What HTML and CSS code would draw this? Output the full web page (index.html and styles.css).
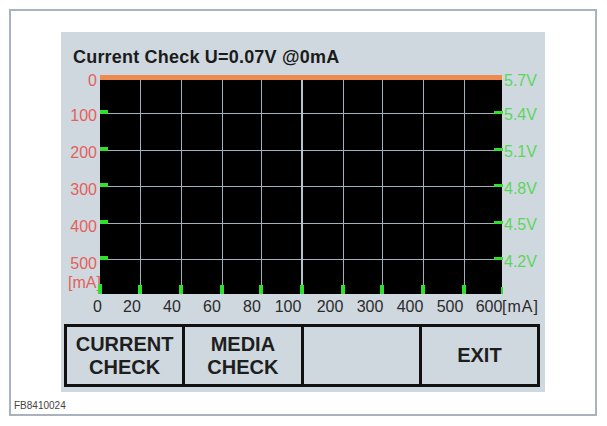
FILE: index.html
```html
<!DOCTYPE html>
<html lang="en">
<head>
    <meta charset="UTF-8">
    <title>Current Check</title>
    <link rel="stylesheet" href="styles.css">
</head>
<body>
    <div class="frame">
        <div class="screen">
            <div class="title">Current Check U=0.07V @0mA</div>

            <!-- chart: current (left, bottom) and voltage (right) -->
            <svg class="chart" width="484" height="256" viewBox="0 0 484 256">
                <!-- unit label sits partly under the plot -->
                <text class="axis-ma" x="7" y="220">[mA]</text>

                <rect x="39" y="7" width="402" height="219" fill="#000"/>
                <rect x="39" y="7" width="402" height="5" fill="#ef8a4f"/>

                <g stroke="#9fb3bc" stroke-width="1">
                    <line x1="39" y1="45.5" x2="441" y2="45.5"/>
                    <line x1="39" y1="82.5" x2="441" y2="82.5"/>
                    <line x1="39" y1="118.5" x2="441" y2="118.5"/>
                    <line x1="39" y1="155.5" x2="441" y2="155.5"/>
                    <line x1="39" y1="191.5" x2="441" y2="191.5"/>
                    <line x1="79.5" y1="12" x2="79.5" y2="226"/>
                    <line x1="120.5" y1="12" x2="120.5" y2="226"/>
                    <line x1="161.5" y1="12" x2="161.5" y2="226"/>
                    <line x1="200.5" y1="12" x2="200.5" y2="226"/>
                    <line x1="282.5" y1="12" x2="282.5" y2="226"/>
                    <line x1="321.5" y1="12" x2="321.5" y2="226"/>
                    <line x1="362.5" y1="12" x2="362.5" y2="226"/>
                    <line x1="403.5" y1="12" x2="403.5" y2="226"/>
                </g>
                <line x1="241" y1="12" x2="241" y2="226" stroke="#b4c5cd" stroke-width="2"/>

                <g fill="#2fe02f">
                    <rect x="39" y="42" width="8" height="4"/>
                    <rect x="39" y="79" width="8" height="4"/>
                    <rect x="39" y="115" width="8" height="4"/>
                    <rect x="39" y="152" width="8" height="4"/>
                    <rect x="39" y="188" width="8" height="4"/>
                    <rect x="433" y="43" width="9" height="3"/>
                    <rect x="433" y="80" width="9" height="3"/>
                    <rect x="433" y="116" width="9" height="3"/>
                    <rect x="433" y="153" width="9" height="3"/>
                    <rect x="433" y="189" width="9" height="3"/>
                    <rect x="37" y="216" width="4" height="10"/>
                    <rect x="77" y="217" width="4" height="9"/>
                    <rect x="118" y="217" width="4" height="9"/>
                    <rect x="159" y="217" width="4" height="9"/>
                    <rect x="198" y="217" width="4" height="9"/>
                    <rect x="239" y="217" width="4" height="9"/>
                    <rect x="280" y="217" width="4" height="9"/>
                    <rect x="319" y="217" width="4" height="9"/>
                    <rect x="360" y="217" width="4" height="9"/>
                    <rect x="401" y="217" width="4" height="9"/>
                    <rect x="440" y="219" width="2" height="7"/>
                </g>

                <g class="axis-ma" text-anchor="end">
                    <text x="36" y="18">0</text>
                    <text x="36" y="53">100</text>
                    <text x="36" y="90">200</text>
                    <text x="36" y="127">300</text>
                    <text x="36" y="164">400</text>
                    <text x="36" y="201">500</text>
                </g>

                <g class="axis-v">
                    <text x="443" y="18">5.7V</text>
                    <text x="443" y="52">5.4V</text>
                    <text x="443" y="89">5.1V</text>
                    <text x="443" y="126">4.8V</text>
                    <text x="443" y="162">4.5V</text>
                    <text x="443" y="199">4.2V</text>
                </g>

                <g class="axis-x" text-anchor="middle">
                    <text x="36.5" y="244">0</text>
                    <text x="71" y="244">20</text>
                    <text x="111" y="244">40</text>
                    <text x="151" y="244">60</text>
                    <text x="191" y="244">80</text>
                    <text x="227" y="244">100</text>
                    <text x="269" y="244">200</text>
                    <text x="309" y="244">300</text>
                    <text x="349" y="244">400</text>
                    <text x="389" y="244">500</text>
                    <text x="428" y="244">600</text>
                    <text x="441" y="244" text-anchor="start" class="unit">[mA]</text>
                </g>
            </svg>

            <div class="buttons">
                <div class="btn">CURRENT<br>CHECK</div>
                <div class="btn">MEDIA<br>CHECK</div>
                <div class="btn"></div>
                <div class="btn">EXIT</div>
            </div>
        </div>
        <div class="figure-id">FB8410024</div>
    </div>
</body>
</html>
```

FILE: styles.css
```css
body {
    margin: 0;
    background-color: #fff;
    font-family: 'Liberation Sans', Arial, sans-serif;
}
.frame {
    box-sizing: border-box;
    margin: 9px 0 0 9px;
    width: 588px;
    height: 407px;
    border: 2px solid #aab3bd;
    padding-top: 21px;
}
.screen {
    box-sizing: border-box;
    margin-left: 50px;
    width: 484px;
    height: 360px;
    padding-top: 14px;
    background-color: #cfd8df;
}
.title {
    padding-left: 12px;
    font-size: 18px;
    line-height: 22px;
    font-weight: bold;
    letter-spacing: 0.2px;
    color: #1b1b1b;
}
.chart {
    display: block;
    font-family: 'Liberation Sans', Arial, sans-serif;
    font-size: 16px;
}
.axis-ma { fill: #e4605a; }
.axis-v { fill: #5bd65b; }
.axis-x { fill: #2b2b2b; }
.axis-x .unit { letter-spacing: 1px; }
.buttons {
    display: flex;
    margin-left: 3px;
    width: 476px;
    height: 63px;
}
.btn {
    flex: 1;
    box-sizing: border-box;
    height: 63px;
    border: 3px solid #111;
    display: flex;
    align-items: center;
    justify-content: center;
    text-align: center;
    font-size: 20px;
    line-height: 23px;
    font-weight: bold;
    color: #1e1e1e;
}
.btn + .btn {
    margin-left: -3px;
}
.figure-id {
    margin: 8px 0 0 3px;
    font-size: 10px;
    line-height: 12px;
    color: #444;
}
```
